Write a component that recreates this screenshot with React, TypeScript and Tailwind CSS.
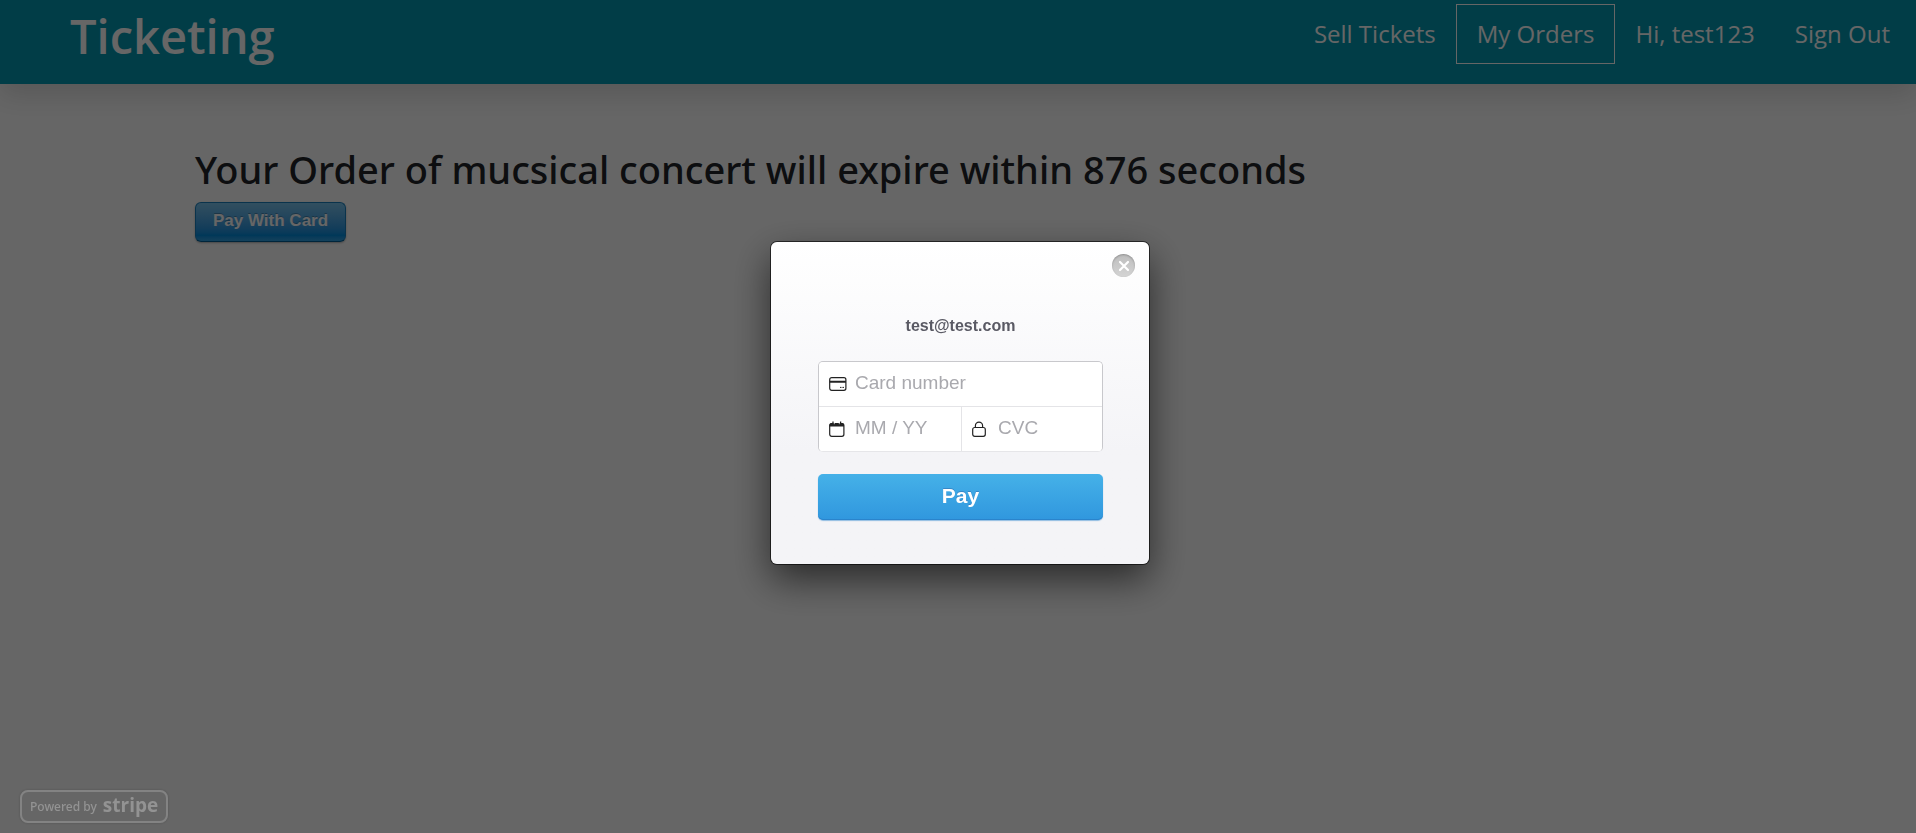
import React, { useState } from "react";

const navLinks = ["Sell Tickets", "My Orders", "Hi, test123", "Sign Out"];

function Header() {
  return (
    <header className="flex h-[84px] items-start justify-between bg-[#0399b2] pr-1.5 pl-[70px] text-white shadow-[0_10px_28px_rgba(0,0,0,0.15)]">
      <a href="#" className="pt-1 text-[47px] leading-[64px] font-semibold">
        Ticketing
      </a>
      <nav className="flex items-start pt-1 text-[24px] leading-[58px]">
        {navLinks.map((label) => (
          <a
            key={label}
            href="#"
            className={label === "My Orders" ? "border border-white px-5" : "px-5 pt-px"}
          >
            {label}
          </a>
        ))}
      </nav>
    </header>
  );
}

function CardIcon() {
  return (
    <svg width="18" height="14" viewBox="0 0 18 14" fill="none" aria-hidden="true">
      <rect x="0.7" y="0.7" width="16.2" height="12.6" rx="2" stroke="#222" strokeWidth="1.2" />
      <path d="M0.7 4.8h16.2" stroke="#222" strokeWidth="2" />
      <path d="M11 10.4h1.5M13.4 10.4h1.6" stroke="#222" strokeWidth="1" />
    </svg>
  );
}

function CalendarIcon() {
  return (
    <svg width="16" height="16" viewBox="0 0 16 16" fill="none" aria-hidden="true">
      <rect x="0.7" y="2.6" width="14.2" height="12.7" rx="2" stroke="#222" strokeWidth="1.2" />
      <path d="M0.5 5.5V4Q0.5 2 2.5 2h10.5Q15 2 15 4V5.5Z" fill="#222" />
      <path d="M4 0.5v2.5M11.6 0.5v2.5" stroke="#222" strokeWidth="1.3" />
      <path d="M5.3 1.5v1.7M10.3 1.5v1.7" stroke="#fff" strokeWidth="0.7" />
    </svg>
  );
}

function LockIcon() {
  return (
    <svg width="14" height="16" viewBox="0 0 14 16" fill="none" aria-hidden="true">
      <rect x="0.7" y="6.5" width="12.6" height="8.8" rx="2" stroke="#222" strokeWidth="1.2" />
      <path d="M3.4 6.5V4.8a3.6 3.6 0 0 1 7.2 0V6.5" stroke="#222" strokeWidth="1.2" />
    </svg>
  );
}

type FieldProps = {
  id: string;
  label: string;
  icon: React.ReactNode;
  className: string;
};

function Field({ id, label, icon, className }: FieldProps) {
  return (
    <div className={`flex items-center bg-white ${className}`}>
      <label htmlFor={id} aria-label={label} className="flex w-[26px] shrink-0">
        {icon}
      </label>
      <input
        id={id}
        placeholder={label}
        className="w-full min-w-0 pb-0.5 text-[19px] leading-6 text-[#333] outline-none placeholder:text-[#a9a9ae]"
      />
    </div>
  );
}

function Checkout({ onClose }: { onClose: () => void }) {
  return (
    <div className="fixed inset-0 flex flex-col items-center justify-between bg-black/60 pt-[242px] pb-2.5 pl-1 font-['Liberation_Sans',Arial,sans-serif]">
      <form
        role="dialog"
        aria-label="Card payment"
        onSubmit={(event) => event.preventDefault()}
        className="relative w-[378px] rounded-md bg-linear-to-b from-white to-[#f4f4f7] to-65% pt-[74px] pr-[46px] pb-11 pl-[47px] shadow-[0_0_0_1px_rgba(0,0,0,0.6),0_15px_38px_rgba(0,0,0,0.6)]"
      >
        <button
          type="button"
          aria-label="Close"
          onClick={onClose}
          className="absolute top-3 right-3.5 flex size-[23px] items-center justify-center rounded-full bg-linear-to-b from-[#bdbdbd] to-[#d4d4d4] shadow-[inset_0_1px_2px_rgba(0,0,0,0.25)]"
        >
          <svg width="12" height="12" viewBox="0 0 12 12" aria-hidden="true">
            <path d="M2 2l8 8M10 2l-8 8" stroke="#fff" strokeWidth="2.2" strokeLinecap="round" />
          </svg>
        </button>
        <p className="pb-[25px] text-center text-[16px] leading-5 font-bold text-[#5a5a64]">
          test@test.com
        </p>
        <div className="overflow-hidden rounded-[5px] border border-[#c8c8cc] border-b-[#e6e6e9] bg-white shadow-[inset_0_1px_1px_rgba(0,0,0,0.08)]">
          <Field
            id="card-number"
            label="Card number"
            icon={<CardIcon />}
            className="h-[45px] border-b border-[#e4e4e7] pl-2.5"
          />
          <div className="flex">
            <Field
              id="expiry"
              label="MM / YY"
              icon={<CalendarIcon />}
              className="h-11 w-[143px] border-r border-[#e4e4e7] pl-2.5"
            />
            <Field id="cvc" label="CVC" icon={<LockIcon />} className="h-11 flex-1 pl-2.5" />
          </div>
        </div>
        <button
          type="submit"
          className="mt-[22px] h-[46px] w-full rounded-[5px] bg-linear-to-b from-[#45b1e8] to-[#3097de] pb-0.5 text-[21px] leading-6 font-bold text-white shadow-[inset_0_-1px_0_#2a84cc,0_1px_1px_rgba(46,134,206,0.5)] [text-shadow:0_-1px_0_rgba(46,86,153,0.4)]"
        >
          Pay
        </button>
      </form>
      <a
        href="#"
        className="ml-4 flex h-[33px] items-center gap-1.5 self-start rounded-lg border-2 border-[#838383] px-2 text-[#939393] shadow-[0_0_3px_rgba(0,0,0,0.2)]"
      >
        <span className="font-['Noto_Sans',sans-serif] text-[12px] leading-4 font-medium">Powered by</span>
        <span className="pb-1 font-['Open_Sans',sans-serif] text-[19px] leading-5 font-bold">stripe</span>
      </a>
    </div>
  );
}

export default function App() {
  const [open, setOpen] = useState(true);
  return (
    <div className="min-h-screen bg-white font-['Open_Sans',sans-serif]">
      <Header />
      <main className="px-[195px] pt-[61px]">
        <h1 className="font-['Noto_Sans',sans-serif] text-[38px] leading-[48px] font-medium text-[#212529]">
          Your Order of mucsical concert will expire within 876 seconds
        </h1>
        <button
          type="button"
          onClick={() => setOpen(true)}
          className="mt-[9px] flex h-10 items-center rounded-md border border-[#1a80bd] border-b-[#015e94] bg-linear-to-b from-[#7dc5ee] via-[#008cdd] via-85% to-[#30a2e4] px-[17px] pb-0.5 font-['Liberation_Sans',Arial,sans-serif] text-[17px] font-bold text-white shadow-[0_1px_2px_rgba(0,0,0,0.3)] [text-shadow:0_-1px_0_rgba(0,0,0,0.25)]"
        >
          Pay With Card
        </button>
      </main>
      {open && <Checkout onClose={() => setOpen(false)} />}
    </div>
  );
}
